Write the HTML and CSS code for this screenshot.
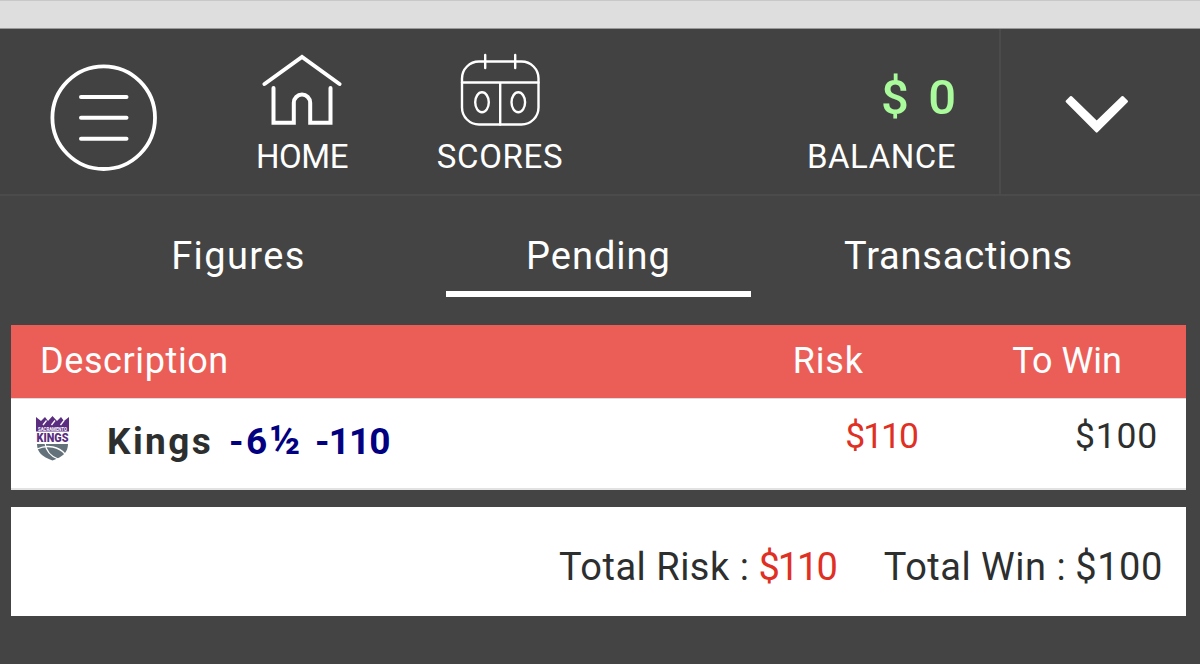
FILE: index.html
```html
<!DOCTYPE html>
<html lang="en">
<head>
    <meta charset="UTF-8">
    <meta name="viewport" content="width=device-width, initial-scale=1.0">
    <title>Pending</title>
    <link rel="stylesheet" href="styles.css">
</head>
<body>
    <div class="browser-bar"></div>

    <header class="header">
        <a class="menu-btn">
            <svg width="108" height="108" viewBox="0 0 108 108">
                <circle cx="53.7" cy="53.7" r="51.3" stroke-width="3.8"/>
                <path d="M31 33H76.5M31 53.8H76.5M31 74.7H76.5" stroke-width="4"/>
            </svg>
        </a>
        <a class="nav-item home">
            <svg width="80" height="72" viewBox="0 0 80 72">
                <path d="M2.5 30L40 3L77.5 30" stroke-width="4"/>
                <path d="M11.5 34V68.8H31.8V48.8a8.2 8.2 0 0 1 16.4 0V68.8H68.5V34" stroke-width="4"/>
            </svg>
            <span>HOME</span>
        </a>
        <a class="nav-item scores">
            <svg width="80" height="74" viewBox="0 0 80 74">
                <rect x="2" y="8.5" width="76.5" height="63" rx="17"/>
                <path d="M2 29.5H78.5M40.2 29.5V71.5M25.2 2V15M55.2 2V15"/>
                <ellipse cx="22" cy="49.3" rx="6.8" ry="10"/>
                <ellipse cx="58.3" cy="49.3" rx="6.8" ry="10"/>
            </svg>
            <span>SCORES</span>
        </a>
        <div class="balance">
            <span class="amount">$ 0</span>
            <span class="label">BALANCE</span>
        </div>
        <a class="toggle">
            <svg width="64" height="40" viewBox="0 0 64 40">
                <path d="M1.8 6.4L6 2.2L31.7 27L57.5 2.2L61.8 6.4L31.7 36.5Z" fill="#fff" stroke-width="2.4" stroke-linejoin="round"/>
            </svg>
        </a>
    </header>

    <nav class="tabs">
        <a class="tab figures">Figures</a>
        <a class="tab pending active">Pending</a>
        <a class="tab transactions">Transactions</a>
    </nav>

    <main class="wagers">
        <div class="table-head">
            <span class="col-desc">Description</span>
            <span class="col-risk">Risk</span>
            <span class="col-win">To Win</span>
        </div>
        <div class="table-row">
            <div class="team">
                <svg class="logo" width="33" height="45" viewBox="0 0 33 45">
                    <path d="M0 1L5 5L9 1L12 5L16.5 0L21 5L25 1L28 5L33 1V15.5H0Z" fill="#5a2d81"/>
                    <path d="M7 9L10.5 4.5M15.5 9L19 4.5M24.5 9L28 4.5" stroke="#fff" stroke-width="1.3"/>
                    <text class="logo-city" x="2" y="14.5" textLength="29" lengthAdjust="spacingAndGlyphs">SACRAMENTO</text>
                    <text class="logo-name" x="0.5" y="26" textLength="32" lengthAdjust="spacingAndGlyphs">KINGS</text>
                    <path d="M1 28H32C32 36 27 41 16.5 44.5C6 41 1 36 1 28Z" fill="#63727a"/>
                    <path d="M1 33C12 28 23 31 29 38M9 27C10 35 14 40 22 43" fill="none" stroke="#fff" stroke-width="1.3"/>
                </svg>
                <span class="team-name">Kings</span>
                <span class="line">-6<span class="half">½</span></span>
                <span class="odds">-110</span>
            </div>
            <span class="risk">$110</span>
            <span class="win">$100</span>
        </div>
        <div class="totals">
            <span class="total-risk">Total Risk :</span>
            <span class="risk">$110</span>
            <span class="total-win">Total Win :</span>
            <span class="win">$100</span>
        </div>
    </main>
</body>
</html>
```
FILE: styles.css
```css
* {
    box-sizing: border-box;
}
body {
    margin: 0;
    height: 664px;
    overflow: hidden;
    background: #444;
    color: #fff;
    font-family: Roboto, "Liberation Sans", sans-serif;
    white-space: nowrap;
}
.browser-bar {
    height: 29px;
    background: #dedede;
    border-top: 1px solid #c8c8c8;
    border-bottom: 1px solid #999;
}

/* header */
.header {
    display: flex;
    height: 167px;
    background: #424242;
    border-bottom: 2px solid #4b4b4b;
}
.header svg {
    display: block;
    fill: none;
    stroke: #fff;
    stroke-width: 2.4;
    stroke-linecap: round;
}
.menu-btn {
    width: 202px;
    padding: 35px 0 0 50px;
}
.nav-item {
    display: flex;
    flex-direction: column;
    align-items: center;
    width: 200px;
    font-size: 33px;
    line-height: 34px;
}
.home svg {
    margin: 25px 0 14px;
}
.home span {
    letter-spacing: -0.4px;
}
.scores {
    width: 196px;
}
.scores svg {
    margin: 24px 0 13px;
}
.scores span {
    letter-spacing: 0.7px;
}
.balance {
    display: flex;
    flex: 1;
    flex-direction: column;
    align-items: flex-end;
    padding: 39px 43px 0 0;
}
.amount {
    height: 72px;
    font-size: 49px;
    line-height: 60px;
    font-weight: 500;
    color: #a9fb9b;
    word-spacing: 7px;
}
.label {
    font-size: 33px;
    line-height: 34px;
    letter-spacing: 0.5px;
}
.toggle {
    width: 201px;
    padding: 66px 0 0 64px;
    border-left: 2px solid #4b4b4b;
}

/* tabs */
.tabs {
    display: flex;
    gap: 55px;
    height: 129px;
    padding-left: 86px;
}
.tab {
    width: 305px;
    height: 101px;
    padding-top: 36px;
    font-size: 38px;
    line-height: 48px;
    text-align: center;
    border-bottom: 6px solid transparent;
}
.tab.active {
    border-color: #fff;
}
.figures {
    letter-spacing: 1.4px;
}
.pending {
    letter-spacing: 1px;
}
.transactions {
    letter-spacing: 0.8px;
}

/* wagers table */
.wagers {
    width: 1175px;
    margin-left: 11px;
    color: #2d2f2f;
}
.table-head {
    display: flex;
    height: 73px;
    padding: 0 64px 0 29px;
    background: #eb5e58;
    color: #fff;
    font-size: 36px;
    line-height: 72px;
}
.col-desc {
    flex: 1;
    letter-spacing: 0.6px;
}
.col-risk {
    letter-spacing: 0.9px;
}
.col-win {
    width: 258px;
    text-align: right;
}
.table-row {
    display: flex;
    height: 92px;
    padding-right: 28px;
    background: #fff;
    border-top: 1px solid #ddd;
    border-bottom: 2px solid #e2e2e2;
    font-size: 35.5px;
    line-height: 74px;
}
.team {
    display: flex;
    flex: 1;
    padding-left: 25px;
    font-size: 37px;
    line-height: 85px;
    font-weight: 700;
}
.logo {
    margin-top: 17px;
    overflow: visible;
}
.logo-city {
    font-size: 4.5px;
    fill: #fff;
}
.logo-name {
    font-size: 12px;
    font-weight: 900;
    fill: #5a2d81;
}
.team-name {
    width: 122px;
    margin-left: 38px;
    letter-spacing: 2.4px;
}
.line,
.odds {
    width: 86px;
    color: #000080;
}
.line {
    letter-spacing: 2.5px;
}
.half {
    font-size: 40px;
    line-height: 0;
}
.odds {
    width: 81px;
    letter-spacing: -0.9px;
}
.risk {
    color: #e03024;
    letter-spacing: -2px;
}
.table-row .win {
    width: 241px;
    text-align: right;
    letter-spacing: 0.8px;
}
.totals {
    display: flex;
    justify-content: flex-end;
    height: 109px;
    margin-top: 17px;
    padding: 19px 23px 0 0;
    background: #fff;
    font-size: 38px;
    line-height: 82px;
}
.total-risk,
.total-win {
    margin-right: 9px;
    letter-spacing: 0.5px;
}
.total-win {
    margin-left: 48px;
}
.totals .win {
    letter-spacing: 0.6px;
}
```
